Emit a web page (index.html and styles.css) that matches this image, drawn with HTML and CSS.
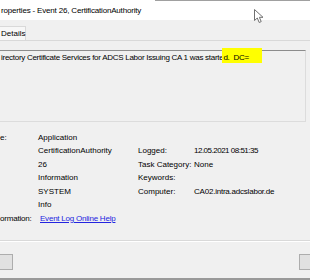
FILE: index.html
```html
<!doctype html>
<html>
<head>
<meta charset="utf-8">
<title>Event Properties</title>
<link rel="stylesheet" href="styles.css">
</head>
<body>
<div class="window">
	<div class="titlebar">roperties - Event 26, CertificationAuthority</div>
	<div class="tabs">
		<div class="tab">Details</div>
	</div>
	<div class="panel">
		<div class="message">irectory Certificate Services for ADCS Labor Issuing CA 1 was starte<span class="mark">d.  DC=</span></div>
		<div class="props">
			<span>e:</span><span>Application</span><span></span><span></span>
			<span></span><span>CertificationAuthority</span><span>Logged:</span><span class="date">12.05.2021 08:51:35</span>
			<span></span><span>26</span><span>Task Category:</span><span>None</span>
			<span></span><span>Information</span><span>Keywords:</span><span></span>
			<span></span><span>SYSTEM</span><span>Computer:</span><span class="host">CA02.intra.adcslabor.de</span>
			<span></span><span>Info</span><span></span><span></span>
			<span class="more">ormation:</span><a class="help" href="#">Event Log Online Help</a>
		</div>
	</div>
	<div class="footer">
		<div class="btn btn-l"></div>
		<div class="btn btn-r"></div>
	</div>
	<!-- mouse pointer from the screenshot -->
	<svg class="cursor" width="11" height="15" viewBox="0 0 11 15">
		<path d="M0.5 0.5 L0.5 11.5 L3.3 9 L5.2 13.5 L7.2 12.6 L5.4 8.3 L9 8.3 Z" fill="#fff" stroke="#707070" stroke-width="1" stroke-linejoin="round"/>
	</svg>
</div>
</body>
</html>
```

FILE: styles.css
```css
*{margin:0;padding:0;box-sizing:border-box}
html,body{width:310px;height:280px;overflow:hidden;background:#f0f0f0}
body{font-family:"Liberation Sans",Arial,sans-serif;font-size:8px;color:#000}
.window{position:relative;width:310px;height:280px;display:flex;flex-direction:column}

.titlebar{height:20px;line-height:21px;padding-left:1px;letter-spacing:-0.18px;background:#fff linear-gradient(to right,#fff 155px,#a0a0a0 155px) no-repeat 0 0/100% 1px;}

.tabs{height:20px;display:flex;align-items:flex-end}
.tab{width:26px;height:14px;line-height:13px;padding-left:1px;background:#f7f7f7;border:1px solid #d9d9d9;border-left:none;border-bottom:none}

.panel{height:201px;padding:9px 4px 0 0;border-top:1px solid #d9d9d9;border-bottom:1px solid #d9d9d9;box-shadow:0 1px 0 #fff}
.message{height:72px;line-height:13.5px;padding-left:1px;letter-spacing:-0.28px;border-top:1px solid #8c8c8c;border-right:1px solid #dcdcdc;border-bottom:1px solid #dcdcdc}
.mark{white-space:pre;background:#ffff00;padding:5px 13px 1px 1px;margin-left:-1px}

.props{display:grid;grid-template-columns:38px 100px 56px 1fr;grid-auto-rows:13.5px;line-height:13.5px;margin-top:8.5px}
.props .date{letter-spacing:-0.5px}
.props .host{letter-spacing:-0.22px}
.props .more{letter-spacing:-0.2px}
.help{grid-column:2/5;margin-left:2px;letter-spacing:-0.22px;color:#2424e0;text-decoration:underline}

.footer{flex:1;display:flex;align-items:flex-start;padding-top:13px;border-bottom:2px solid #999}
.btn{height:16px;background:#e1e1e1;border:1px solid #adadad}
.btn-l{width:13px;border-left:none}
.btn-r{width:11px;margin-left:auto;border-right:none}

.cursor{position:absolute;left:254px;top:9px}
```
